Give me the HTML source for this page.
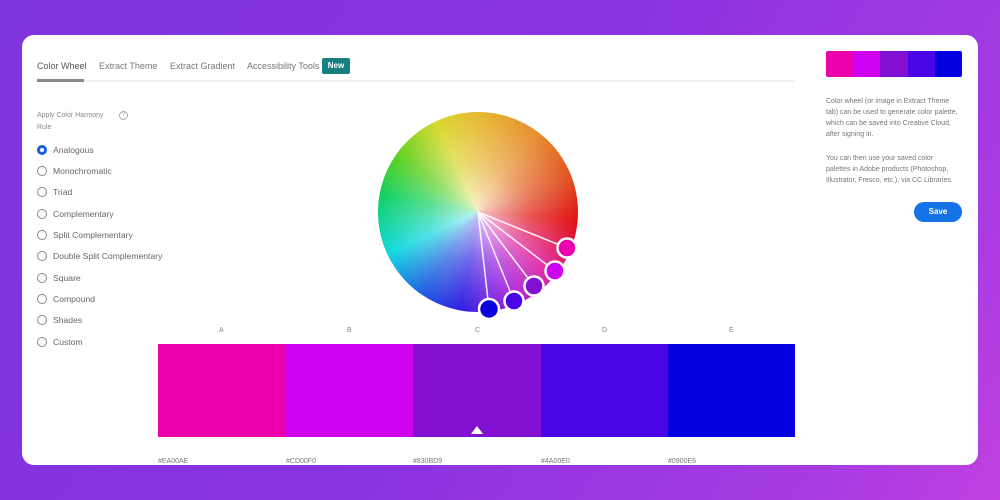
<!DOCTYPE html>
<html><head><style>
*{margin:0;padding:0;box-sizing:border-box}
body{width:1000px;height:500px;overflow:hidden;font-family:"Liberation Sans",sans-serif;background:linear-gradient(120deg,#7e34dc 0%,#8a33e0 50%,#a83be2 85%,#c040e0 100%);position:relative}
.card{position:absolute;left:22px;top:35px;width:956px;height:430px;background:#fff;border-radius:12px;overflow:hidden}
.abs{position:absolute}
.tab{position:absolute;top:26px;font-size:9px;color:#777}
.r{position:absolute;left:15px;font-size:8.6px;color:#666;display:flex;align-items:center}
.r i{display:inline-block;width:10px;height:10px;border:1.3px solid #888;border-radius:50%;margin-right:6px}
.r.on i{border:3px solid #1c5fd6}
.sw{position:absolute;top:309px;height:93px}
.lbl{position:absolute;top:292px;font-size:7px;color:#888}
.hex{position:absolute;top:423px;font-size:7px;color:#777}
.p{position:absolute;left:804px;width:133px;font-size:7px;line-height:11px;color:#777}
</style></head><body>
<div class="card">
<div class="tab" style="left:15px;color:#555">Color Wheel</div>
<div class="tab" style="left:77px">Extract Theme</div>
<div class="tab" style="left:148px">Extract Gradient</div>
<div class="tab" style="left:225px">Accessibility Tools</div>
<div class="abs" style="left:300px;top:23px;width:28px;height:16px;background:#167f80;border-radius:2px;color:#fff;font-size:8px;font-weight:bold;text-align:center;line-height:16px">New</div>
<div class="abs" style="left:15px;top:45px;width:758px;height:2px;background:#eee"></div>
<div class="abs" style="left:15px;top:44px;width:47px;height:3px;background:#888"></div>
<div class="abs" style="left:15px;top:75px;font-size:7px;line-height:12px;color:#888">Apply Color Harmony<br>Rule</div>
<div class="abs" style="left:97px;top:76px;width:9px;height:9px;border:1px solid #aaa;border-radius:50%;font-size:6px;color:#999;text-align:center;line-height:7px">?</div>
<div class="r on" style="top:110px"><i></i>Analogous</div>
<div class="r" style="top:131px"><i></i>Monochromatic</div>
<div class="r" style="top:152px"><i></i>Triad</div>
<div class="r" style="top:174px"><i></i>Complementary</div>
<div class="r" style="top:195px"><i></i>Split Complementary</div>
<div class="r" style="top:216px"><i></i>Double Split Complementary</div>
<div class="r" style="top:238px"><i></i>Square</div>
<div class="r" style="top:259px"><i></i>Compound</div>
<div class="r" style="top:280px"><i></i>Shades</div>
<div class="r" style="top:302px"><i></i>Custom</div>

<div class="abs" style="left:356px;top:77px;width:200px;height:200px;border-radius:50%;background:conic-gradient(from 0deg,#e8b830 0deg,#e69030 35deg,#e05020 70deg,#e01010 95deg,#e020a0 130deg,#a020e0 160deg,#3020e0 190deg,#2060e0 215deg,#10d8e0 245deg,#10d060 280deg,#60d020 305deg,#d8d830 335deg,#e8b830 360deg)"></div>
<div class="abs" style="left:356px;top:77px;width:200px;height:200px;border-radius:50%;background:radial-gradient(circle,rgba(255,255,255,.75) 0%,rgba(255,255,255,.3) 35%,rgba(255,255,255,0) 70%)"></div>
<svg class="abs" style="left:0;top:0" width="956" height="430">
<g stroke="#fff" stroke-width="1.5" opacity=".9">
<line x1="456" y1="177" x2="545" y2="213"/><line x1="456" y1="177" x2="533" y2="236"/><line x1="456" y1="177" x2="512" y2="251"/><line x1="456" y1="177" x2="492" y2="266"/><line x1="456" y1="177" x2="467" y2="274"/>
</g>
<g stroke="#fff" stroke-width="2.5">
<circle cx="545" cy="213" r="9.5" fill="#ec00ae"/><circle cx="533" cy="236" r="9.5" fill="#cd00ef"/><circle cx="512" cy="251" r="9.5" fill="#8310d0"/><circle cx="492" cy="266" r="9.5" fill="#4a05e5"/><circle cx="467" cy="274" r="10" fill="#0a00e0"/>
</g></svg>

<div class="lbl" style="left:197px">A</div><div class="lbl" style="left:325px">B</div><div class="lbl" style="left:453px">C</div><div class="lbl" style="left:580px">D</div><div class="lbl" style="left:707px">E</div>
<div class="sw" style="left:136px;width:128px;background:#ec00ae"></div>
<div class="sw" style="left:264px;width:127px;background:#cd00ef"></div>
<div class="sw" style="left:391px;width:128px;background:#8310d0"></div>
<div class="sw" style="left:519px;width:127px;background:#4a05e5"></div>
<div class="sw" style="left:646px;width:127px;background:#0500e0"></div>
<div class="abs" style="left:449px;top:391px;width:0;height:0;border-left:6px solid transparent;border-right:6px solid transparent;border-bottom:8px solid #fff"></div>
<div class="hex" style="left:136px">#EA00AE</div><div class="hex" style="left:264px">#CD00F0</div><div class="hex" style="left:391px">#830BD9</div><div class="hex" style="left:519px">#4A00E0</div><div class="hex" style="left:646px">#0900E6</div>

<div class="abs" style="left:804px;top:16px;width:136px;height:26px;display:flex;border-radius:2px;overflow:hidden">
<div style="flex:1;background:#ec00ae"></div><div style="flex:1;background:#cd00ef"></div><div style="flex:1;background:#8310d0"></div><div style="flex:1;background:#4a05e5"></div><div style="flex:1;background:#0500e0"></div></div>
<div class="p" style="top:61px">Color wheel (or image in Extract Theme tab) can be used to generate color palette, which can be saved into Creative Cloud, after signing in.</div>
<div class="p" style="top:118px">You can then use your saved color palettes in Adobe products (Photoshop, Illustrator, Fresco, etc.), via CC Libraries.</div>
<div class="abs" style="left:892px;top:167px;width:48px;height:20px;background:#1473e6;border-radius:10px;color:#fff;font-size:8px;font-weight:bold;text-align:center;line-height:20px">Save</div>
</div>
</body></html>
